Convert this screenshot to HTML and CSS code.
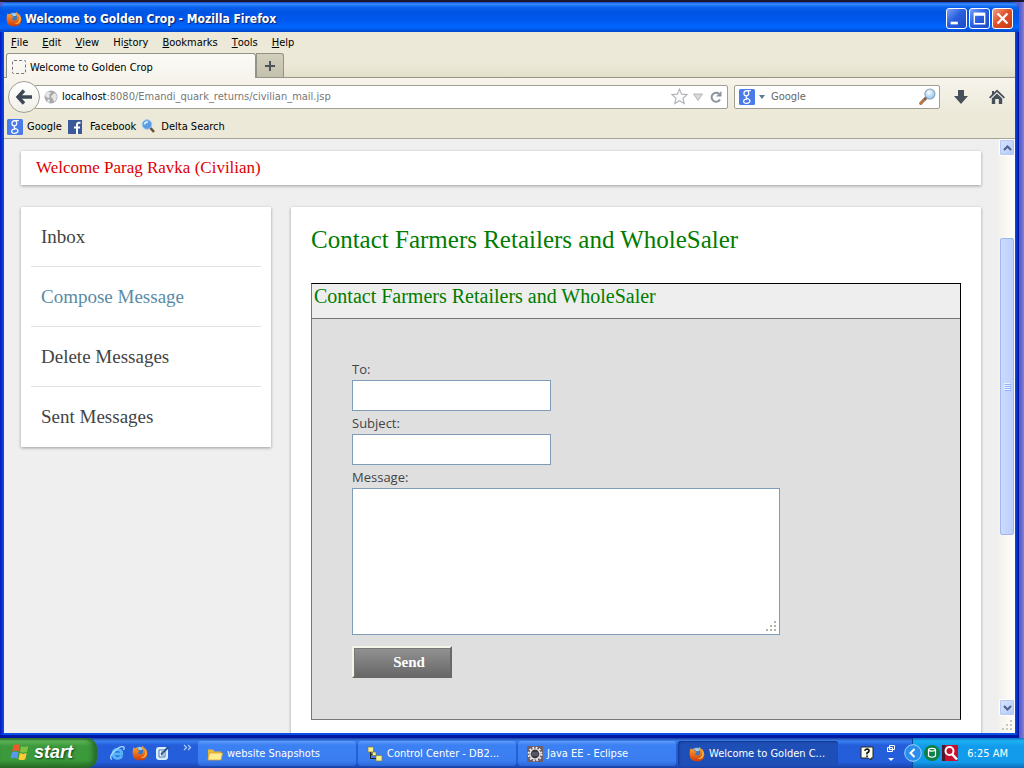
FILE: index.html
```html
<!DOCTYPE html>
<html lang="en">
<head>
<meta charset="utf-8">
<title>Welcome to Golden Crop</title>
<link rel="stylesheet" href="styles.css">
</head>
<body>
<svg class="defs" aria-hidden="true">
  <defs>
    <linearGradient id="g-fox" x1="0" y1="0" x2="0" y2="1"><stop offset="0" stop-color="#ffb02e"/><stop offset=".5" stop-color="#f0701a"/><stop offset="1" stop-color="#c63a10"/></linearGradient>
    <radialGradient id="g-lens" cx=".4" cy=".35" r=".7"><stop offset="0" stop-color="#fff"/><stop offset="1" stop-color="#7fc0ee"/></radialGradient>
    <symbol id="firefox" viewBox="0 0 16 16">
      <circle cx="8" cy="8" r="6.8" fill="#3b78c4"/>
      <path d="M5 3Q8 1 11 3L10 5 7 5Z" fill="#9fd0f2"/>
      <path d="M1.6 2.2 3.2 3.4Q4.4 2.4 6 2.6L5 4.6Q6 5.6 7.6 5.6 7.6 6.6 6 7.2 6 9 8 9.4 9.8 9.6 10.6 8.4 12.2 6 10 3.6 9.6 2 11 .8 11 2.4 12.6 3.6L12.6 2.6Q15.6 5.4 15.4 8.8 15 15.4 8 15.6 1 15.2.6 8.4.5 4.8 1.6 2.2Z" fill="url(#g-fox)"/>
      <path d="M12.6 3.6Q14.4 6 13.4 9 12 12.6 8.4 12.8 13 14 14.6 9 15 5.6 12.6 3.6Z" fill="#ffd04a"/>
    </symbol>
    <symbol id="google" viewBox="0 0 16 16">
      <rect width="16" height="16" rx="1.5" fill="#4a7bea"/>
      <path d="M11.8 1.6H7.6Q4.9 1.8 4.9 4.4 4.9 6.8 7.4 6.8 9.8 6.6 9.8 4.2 9.6 2 7.6 1.7M7.6 6.8Q6.4 8.2 8 9.2 11.2 10.4 11 12.2 10.4 14.4 7.6 14.4 4.4 14.2 4.6 12 5 9.8 8.6 9.8" fill="none" stroke="#fff" stroke-width="1.2"/>
    </symbol>
    <symbol id="magnifier" viewBox="0 0 16 16">
      <path d="M6.6 9.4 1.6 14.4" stroke="#b87848" stroke-width="3" stroke-linecap="round"/>
      <path d="M6.8 9.2 5 11" stroke="#666" stroke-width="2"/>
      <circle cx="10.3" cy="5.7" r="4.7" fill="url(#g-lens)" stroke="#8ba0ba"/>
    </symbol>
  </defs>
</svg>

<div class="desktop">
  <div class="window">
    <header class="titlebar">
      <svg class="i16"><use href="#firefox"/></svg>
      <h1 class="titlebar-text">Welcome to Golden Crop - Mozilla Firefox</h1>
      <div class="window-buttons">
        <button class="wbtn" aria-label="Minimize"><svg viewBox="0 0 21 21"><path d="M4 14h8v3H4z" fill="#fff"/></svg></button>
        <button class="wbtn" aria-label="Maximize"><svg viewBox="0 0 21 21"><path d="M4 4h13v13H4zM5.500 7.500v8h10v-8z" fill="#fff" fill-rule="evenodd"/></svg></button>
        <button class="wbtn wbtn-close" aria-label="Close"><svg viewBox="0 0 21 21"><path d="M5 5l11 11M16 5L5 16" stroke="#fff" stroke-width="2.500"/></svg></button>
      </div>
    </header>

    <div class="chrome">
      <nav class="menubar">
        <button><u>F</u>ile</button><button><u>E</u>dit</button><button><u>V</u>iew</button><button>Hi<u>s</u>tory</button><button><u>B</u>ookmarks</button><button><u>T</u>ools</button><button><u>H</u>elp</button>
      </nav>
      <div class="tabs">
        <button class="tab"><span class="tab-icon"></span>Welcome to Golden Crop</button>
        <button class="newtab" aria-label="New tab"><svg viewBox="0 0 12 12"><path d="M6 1v10M1 6h10" stroke="#4b5259" stroke-width="2"/></svg></button>
      </div>
      <div class="navbar">
        <button class="back" aria-label="Back"><svg viewBox="0 0 18 18"><path d="M9 2.500 3 9l6 6.500M3.500 9H17" fill="none" stroke="#3e4854" stroke-width="3.400"/></svg></button>
        <div class="urlbar">
          <svg class="globe" viewBox="0 0 14 14"><circle cx="7" cy="7" r="6.500" fill="#a9a9a9"/><path d="M2 3 5 1.500 7 3 5 5 6 7 4 8 1 6ZM8 5l3-2 2 3-1 4-2 2-1-3-2-2ZM4 9l2 1-1 3-2-1Z" fill="#e6e6e6"/></svg>
          <label for="url">localhost</label><input id="url" type="text" value=":8080/Emandi_quark_returns/civilian_mail.jsp">
          <button aria-label="Bookmark this page"><svg viewBox="0 0 17 17"><path d="M8.500 1.200 10.700 6.200 16 6.600 12 10.200 13.200 15.500 8.500 12.700 3.800 15.500 5 10.200 1 6.600 6.300 6.200Z" fill="#fdfdfd" stroke="#b2b5ba" stroke-width="1.200"/></svg></button>
          <button class="history" aria-label="Show history"><svg viewBox="0 0 12 12"><path d="M1.500 3h9L6 9.500Z" fill="#d8d8d8" stroke="#b8b8b8"/></svg></button>
          <button class="reload" aria-label="Reload"><svg viewBox="0 0 14 14"><path d="M10 3.800A4.500 4.500 0 1 0 11 9.500" fill="none" stroke="#8d949c" stroke-width="2"/><path d="M12.500 1v5.500H7Z" fill="#8d949c"/></svg></button>
        </div>
        <div class="searchbar">
          <svg class="i16"><use href="#google"/></svg>
          <svg class="caret" viewBox="0 0 6 4"><path d="M0 0h6L3 4Z" fill="#5a7a95"/></svg>
          <input type="text" placeholder="Google" aria-label="Search">
          <button aria-label="Search"><svg><use href="#magnifier"/></svg></button>
        </div>
        <button class="tool" aria-label="Downloads"><svg viewBox="0 0 16 16"><path d="M5 1h6v6h4L8 15 1 7h4Z" fill="#46505b"/></svg></button>
        <button class="tool" aria-label="Home"><svg viewBox="0 0 16 16"><path d="M8 .5 16 8.200 14.800 9.400 8 3 1.200 9.400 0 8.200 3 5.200V2h2v1.400Z" fill="#46505b"/><path d="M8 4.500 13.200 9.500V15H9.800V10H6.200v5H2.800V9.500Z" fill="#46505b"/></svg></button>
      </div>
      <nav class="bookmarks">
        <a href="#google"><svg class="i16"><use href="#google"/></svg>Google</a>
        <a href="#facebook" class="fb"><svg class="i16" viewBox="0 0 16 16"><path d="M1 1h14v14H1z" fill="#3b5998"/><path d="M13.500 3.800H12Q10 3.800 10 6V15M7 8.500h6" fill="none" stroke="#fff" stroke-width="2"/></svg>Facebook</a>
        <a href="#delta"><svg class="i16" viewBox="0 0 16 16"><circle cx="6" cy="5.500" r="4.800" fill="#5a9fe6" stroke="#a2c8ee"/><path d="M3.500 5.500Q4 2.500 7 3" stroke="#e8f5ff" fill="none" stroke-width="1.500"/><path d="m9.500 9 3.500 4" stroke="#684f32" stroke-width="2.500"/></svg>Delta Search</a>
      </nav>
    </div>

    <div class="viewport">
      <div class="page">
        <div class="container">
          <p class="welcome">Welcome Parag Ravka (Civilian)</p>
          <div class="columns">
            <nav class="sidebar">
              <a href="#inbox">Inbox</a>
              <a href="#compose" class="active">Compose Message</a>
              <a href="#delete">Delete Messages</a>
              <a href="#sent">Sent Messages</a>
            </nav>
            <main class="content">
              <h2 class="content-title">Contact Farmers Retailers and WholeSaler</h2>
              <section class="panel">
                <h3 class="panel-title">Contact Farmers Retailers and WholeSaler</h3>
                <form class="mail-form">
                  <label for="to">To:</label>
                  <input id="to" type="text">
                  <label for="subject">Subject:</label>
                  <input id="subject" type="text">
                  <label for="message">Message:</label>
                  <div class="message-box">
                    <textarea id="message"></textarea>
                    <svg class="grip" viewBox="0 0 12 12"><path d="M8 0h2v2H8zM4 4h2v2H4zM8 4h2v2H8zM0 8h2v2H0zM4 8h2v2H4zM8 8h2v2H8z" fill="#b5b3a4"/></svg>
                  </div>
                  <button class="send" type="button">Send</button>
                </form>
              </section>
            </main>
          </div>
        </div>
      </div>
      <div class="scrollbar">
        <button class="sbtn" aria-label="Scroll up"><svg viewBox="0 0 9 6"><path d="M1 5 4.500 1.500 8 5" fill="none" stroke="#4d6185" stroke-width="2"/></svg></button>
        <div class="track">
          <div class="thumb"><svg viewBox="0 0 7 8"><path d="M0 .5h6M0 2.500h6M0 4.500h6M0 6.500h6" stroke="#eef4fe"/><path d="M1 1.500h6M1 3.500h6M1 5.500h6M1 7.500h6" stroke="#8cb0f8"/></svg></div>
        </div>
        <button class="sbtn" aria-label="Scroll down"><svg viewBox="0 0 9 6"><path d="M1 1 4.500 4.500 8 1" fill="none" stroke="#4d6185" stroke-width="2"/></svg></button>
        <svg class="corner" viewBox="0 0 12 12"><path d="M8 0h2v2H8zM4 4h2v2H4zM8 4h2v2H8zM0 8h2v2H0zM4 8h2v2H4zM8 8h2v2H8z" fill="#c9c6bd"/></svg>
      </div>
    </div>
  </div>

  <footer class="taskbar">
    <button class="start"><svg viewBox="0 0 18 18"><path d="M3 3Q6 1 9 3L7.800 8.500Q5 6.800 2 8.500Z" fill="#ec5a2c"/><path d="M10 3.500Q13 5.200 16.500 3.500L15.300 9Q12 10.500 9 9Z" fill="#7ec242"/><path d="M1.800 9.500Q5 7.800 7.600 9.500L6.400 15Q3.500 13.200.5 15Z" fill="#5b97ee"/><path d="M8.800 10Q12 11.500 15 10L13.800 15.500Q10.500 17 7.600 15.500Z" fill="#fccb35"/></svg>start</button>
    <div class="quick">
      <button aria-label="Internet Explorer"><svg viewBox="0 0 16 16"><path d="M12.800 10.800Q11.500 13.300 8.300 13.300 4 13 4 8.800 4.300 4.500 8.300 4.500 12.800 4.700 12.800 9H5" fill="none" stroke="#58b4f4" stroke-width="2.800"/><path d="M3 14.500Q-.5 12.500 5 6.500 11 .5 14.500 1.800 15.800 3 14.500 5" fill="none" stroke="#a8dcff" stroke-width="1.300"/></svg></button>
      <button aria-label="Firefox"><svg><use href="#firefox"/></svg></button>
      <button aria-label="Show Desktop"><svg viewBox="0 0 16 16"><rect x="1" y="2" width="12" height="13" rx="3" fill="#d9edfb"/><path d="M4 5h6v7H4z" fill="#fff" stroke="#3e77b8"/><path d="M6 9.500 13.500 2" stroke="#24528c" stroke-width="2"/><path d="M6 7h3M6 10h3" stroke="#3e77b8"/></svg></button>
      <button class="more" aria-label="More"><svg viewBox="0 0 9 7"><path d="m1 1 2.500 2.500L1 6M5 1l2.500 2.500L5 6" fill="none" stroke="#a9c8fb" stroke-width="1.300"/></svg></button>
    </div>
    <div class="tasks">
      <button class="task"><svg viewBox="0 0 16 16"><path d="M1 3.500h5l1.500 2H14V14H1Z" fill="#e9b93c"/><path d="M2.500 7H15.500L14 14H1Z" fill="#ffec92" stroke="#d9a227" stroke-width=".7"/></svg>website Snapshots</button>
      <button class="task"><svg viewBox="0 0 16 16"><path d="M3.500 6v6.500H9M4 8.500h3" fill="none" stroke="#222"/><path d="M1 1h5.500v5H1zM9 9.500h6v5.500H9zM5.500 6H9v3.500H5.500z" fill="#fbf08c" stroke="#77713a" stroke-width=".6"/></svg>Control Center - DB2...</button>
      <button class="task"><svg viewBox="0 0 16 16"><path d="M0 0h16v16H0z" fill="#6d5f68"/><circle cx="8" cy="8" r="6.400" fill="none" stroke="#f0f0f0" stroke-width="2" stroke-dasharray="1.700 1.650"/><circle cx="8" cy="8" r="5" fill="#3a3640" stroke="#eee" stroke-width="1.200"/><path d="M4.500 7h7M4.500 9h7" stroke="#77718a"/></svg>Java EE - Eclipse</button>
      <button class="task task-active"><svg><use href="#firefox"/></svg>Welcome to Golden C...</button>
    </div>
    <div class="lang">
      <button aria-label="Help"><svg viewBox="0 0 14 14"><path d="M1 1h12v11h-2v2l-3-2H1Z" fill="#fffff0" stroke="#222"/><path d="M4.800 4.800Q5 3 7 3 9.300 3.200 9 5 8.800 6.300 7 7v1.500M7 9.500V11" fill="none" stroke="#111" stroke-width="1.600"/></svg></button>
      <button class="restore" aria-label="Language options"><svg viewBox="0 0 10 18"><path d="M3.500 1.500h5v4h-5zM1.500 3.500h5v4h-5z" fill="#2f63d2" stroke="#fff"/><path d="M2 14h6l-3 3Z" fill="#fff"/></svg></button>
    </div>
    <div class="tray">
      <button class="hide-icons" aria-label="Hide icons"><svg viewBox="0 0 18 18"><circle cx="9" cy="9" r="8.300" fill="#2b8eea" stroke="#9bd3fb"/><path d="M10.500 5 6.500 9l4 4" fill="none" stroke="#fff" stroke-width="2"/></svg></button>
      <svg viewBox="0 0 16 16"><circle cx="8" cy="8" r="8" fill="#0d8048"/><path d="M4.500 5v6Q8 13.500 11.500 11V5" fill="none" stroke="#fff" stroke-width="1.200"/><ellipse cx="8" cy="4.800" rx="3.500" ry="1.400" fill="none" stroke="#fff" stroke-width="1.200"/></svg>
      <svg viewBox="0 0 16 16"><path d="M0 0h16v16H0z" fill="#c8102e"/><path d="M0 0h3v16H0z" fill="#52152a"/><circle cx="7.500" cy="6" r="4" fill="#c8102e" stroke="#fff" stroke-width="2"/><path d="m10 9 5 5.500" stroke="#fff" stroke-width="2.500"/></svg>
      <time class="clock">6:25 AM</time>
    </div>
  </footer>
</div>
</body>
</html>
```
FILE: styles.css
```css
* { box-sizing: border-box; }

body {
  margin: 0;
  font-family: "DejaVu Sans Condensed", "DejaVu Sans", sans-serif;
  font-size: 11px;
  color: #000;
}

button, input, textarea { font: inherit; color: inherit; }
button { display: flex; align-items: center; padding: 0; border: 0; background: none; white-space: nowrap; }
a { color: inherit; text-decoration: none; }
svg { display: block; flex: none; }
.defs { position: absolute; width: 0; height: 0; }
.i16 { width: 16px; height: 16px; }

.desktop {
  display: flex;
  flex-direction: column;
  height: 100vh;
  overflow: hidden;
  border-top: 2px solid #1b1730;
  background: linear-gradient(90deg, #5c5cc4 calc(100% - 4px), #7d80e0);
}

/* Window frame */
.window {
  display: flex;
  flex: 1;
  flex-direction: column;
  min-height: 0;
  margin-right: 5px;
  padding: 0 4px 5px;
  border-radius: 8px 8px 0 0;
  background: linear-gradient(90deg, #0018c0, #0b50e6 4px, #0b50e6 calc(100% - 4px), #0010a0);
  box-shadow: inset 0 -3px 0 #0018a4;
}

.titlebar {
  display: flex;
  align-items: center;
  gap: 3px;
  height: 30px;
  margin: 0 -4px;
  padding: 3px 6px 0;
  border-radius: 8px 8px 0 0;
  background: linear-gradient(#0a46c8, #3a8efc 2px, #0a63ee 5px, #0054e3 10px, #0058ee 18px, #0066ff 25px, #0047cc);
}

.titlebar-text {
  flex: 1;
  margin: 0;
  font-size: 12px;
  font-weight: bold;
  color: #fff;
  text-shadow: 1px 1px 1px #0a1f66;
}

.window-buttons { display: flex; gap: 2px; }
.wbtn {
  width: 21px;
  height: 21px;
  border: 1px solid #fff;
  border-radius: 3px;
  background: linear-gradient(135deg, #7ba2f4, #2a5fe0 45%, #1a4bc8);
}
.wbtn svg { width: 19px; height: 19px; }
.wbtn-close { background: linear-gradient(135deg, #f0a088, #e0512b 45%, #c43a14); }

/* Browser toolbars */
.chrome { background: #ece9d8; border-bottom: 1px solid #a5a396; }

.menubar { display: flex; gap: 14px; height: 21px; padding: 0 7px; }

.tabs {
  display: flex;
  align-items: flex-end;
  height: 25px;
  padding-left: 2px;
  border-bottom: 1px solid #94938a;
  background: linear-gradient(#ece9d8 50%, #e2dfc9);
}
.tab {
  width: 250px;
  height: 25px;
  gap: 4px;
  padding: 2px 6px 0 5px;
  margin-bottom: -1px;
  border: 1px solid #94938a;
  border-bottom: 0;
  border-radius: 3px 3px 0 0;
  background: linear-gradient(#fbfaf6, #f6f4ec);
}
.tab-icon { width: 14px; height: 14px; border: 1px dashed #777; border-radius: 2px; }
.newtab {
  justify-content: center;
  width: 28px;
  height: 24px;
  border: 1px solid #94938a;
  border-bottom: 0;
  border-radius: 0 3px 0 0;
  background: linear-gradient(#d2cfbd, #c3c0ae);
}
.newtab svg { width: 12px; height: 12px; }

.navbar {
  display: flex;
  align-items: center;
  height: 37px;
  padding-right: 10px;
  background: linear-gradient(#f6f4ec, #ece9d8);
}
.back {
  z-index: 1;
  justify-content: center;
  width: 32px;
  height: 32px;
  margin-left: 4px;
  border: 1px solid #a19f94;
  border-radius: 50%;
  background: linear-gradient(#fff, #f0eee6);
}
.back svg { width: 18px; height: 18px; }
.urlbar, .searchbar {
  display: flex;
  align-items: center;
  height: 24px;
  border: 1px solid #a19f94;
  border-radius: 2px;
  background: #fff;
}
.urlbar { flex: 1; margin-left: -6px; padding: 0 4px 0 9px; }
.urlbar input, .searchbar input { flex: 1; min-width: 0; padding: 0; border: 0; outline: 0; background: none; color: #777; }
.urlbar button svg { width: 17px; height: 17px; }
.globe { width: 14px; height: 14px; margin-right: 4px; }
.urlbar .history { margin: 0 5px 0 4px; }
.urlbar .history svg { width: 12px; height: 12px; }
.urlbar .reload svg { width: 14px; height: 14px; }
.searchbar { flex: 0 0 206px; margin: 0 13px 0 6px; padding: 0 3px 0 4px; }
.searchbar input::placeholder { color: #666; opacity: 1; }
.searchbar button svg { width: 17px; height: 17px; }
.caret { width: 6px; height: 4px; margin: 0 6px 0 4px; }
.tool svg { width: 16px; height: 16px; }
.tool + .tool { margin-left: 20px; }

.bookmarks { display: flex; gap: 5px; height: 23px; padding: 0 3px; }
.bookmarks a { display: flex; align-items: center; gap: 4px; }
.bookmarks .fb { gap: 7px; }

/* Web page */
.viewport { display: flex; flex: 1; min-height: 0; background: #efefef; }
.page {
  flex: 1;
  min-width: 0;
  overflow: hidden;
  font-family: "Liberation Serif", serif;
}
.container { max-width: 960px; margin: 0 auto; padding-top: 12px; }
.welcome, .sidebar, .content { background: #fff; box-shadow: 0 1px 3px rgba(0, 0, 0, .35); }
.welcome {
  margin: 0 0 22px;
  padding: 0 15px;
  font-size: 17px;
  line-height: 34px;
  color: #e00000;
}
.columns { display: flex; align-items: flex-start; gap: 20px; }
.sidebar { flex: 0 0 250px; padding: 0 10px; font-size: 19px; color: #444; }
.sidebar a { display: block; height: 60px; padding: 0 10px; line-height: 60px; border-bottom: 1px solid #e2e2e2; }
.sidebar a:last-child { border-bottom: 0; }
.sidebar .active { color: #5a8ba5; }

.content { flex: 1; padding: 15px 20px 40px; color: #007c00; }
.content-title { margin: 0 0 25px; font-size: 25px; font-weight: normal; line-height: 36px; }
.panel { border: 1px solid #000; border-left-color: #777; border-bottom-color: #777; background: #dfdfdf; }
.panel-title {
  margin: 0;
  padding: 0 2px 9px;
  font-size: 20px;
  font-weight: normal;
  line-height: 25px;
  border-bottom: 1px solid #777;
  background: #eee;
}

.mail-form {
  display: flex;
  flex-direction: column;
  align-items: flex-start;
  padding: 38px 40px 41px;
  font-family: "Open Sans", sans-serif;
  font-size: 13px;
  color: #444;
}
.mail-form label { padding-top: 2px; line-height: 21px; }
.mail-form input, .mail-form textarea { display: block; border: 1px solid #7f9db9; background: #fff; }
.mail-form input { width: 199px; height: 31px; padding: 4px; }
.message-box { position: relative; width: 428px; max-width: 100%; }
.mail-form textarea { width: 100%; height: 147px; padding: 4px; resize: none; }
.grip { position: absolute; right: 2px; bottom: 2px; width: 12px; height: 12px; }
.send {
  justify-content: center;
  width: 100px;
  height: 32px;
  margin-top: 11px;
  padding-left: 14px;
  border: 2px solid;
  border-color: #f4f5e8 #686868 #686868 #f4f5e8;
  border-radius: 2px 0 0 0;
  background: linear-gradient(#929292, #686868);
  box-shadow: inset 1px 1px 0 #777;
  font-family: "Liberation Serif", serif;
  font-size: 15px;
  font-weight: bold;
  color: #fff;
}

/* Scrollbar */
.scrollbar { display: flex; flex: 0 0 17px; flex-direction: column; background: linear-gradient(90deg, #f3f1ec, #fefefb); }
.sbtn {
  justify-content: center;
  height: 17px;
  margin-left: 1px;
  border: 1px solid #fff;
  border-radius: 2px;
  background: linear-gradient(135deg, #dae5fe, #b4c9fa);
  box-shadow: inset 0 0 0 1px #b4c8f6;
}
.sbtn svg { width: 9px; height: 6px; }
.track { flex: 1; display: grid; grid-template-rows: 82fr 297fr 164fr; }
.thumb {
  grid-row: 2;
  display: flex;
  align-items: center;
  justify-content: center;
  margin: 0 1px 0 2px;
  border: 1px solid #a0b8ee;
  border-radius: 2px;
  background: linear-gradient(90deg, #cbdafe, #bccffc);
}
.thumb svg { width: 7px; height: 8px; }
.corner { width: 12px; height: 12px; margin: 4px 0 1px 4px; }

/* Taskbar */
.taskbar {
  display: flex;
  flex: 0 0 30px;
  background: linear-gradient(#1941a5, #3a80f0 3px, #245edb 7px, #245edb 24px, #1941a5);
  color: #fff;
}
.start {
  gap: 4px;
  width: 97px;
  padding: 0 10px 2px;
  border-radius: 0 10px 10px 0;
  background: linear-gradient(#2c702c, #5fb75a 3px, #3c993c 8px, #3a9a3a 22px, #256b25);
  box-shadow: inset -4px 0 5px #276a27;
  font-family: "Liberation Sans", sans-serif;
  font-size: 18px;
  font-weight: bold;
  font-style: italic;
  text-shadow: 1px 1px 2px #143c14;
}
.start svg { width: 20px; height: 20px; }
.quick { display: flex; gap: 7px; width: 101px; padding-left: 12px; }
.quick svg { width: 16px; height: 16px; }
.quick .more { align-items: flex-start; padding-top: 6px; margin-left: 5px; }
.quick .more svg { width: 9px; height: 7px; }
.tasks { display: flex; flex: 1; gap: 2px; min-width: 0; padding: 3px 0 2px; }
.task {
  flex: 0 1 158px;
  min-width: 0;
  gap: 4px;
  padding: 0 9px;
  overflow: hidden;
  border-radius: 3px;
  background: linear-gradient(#5e9bfb, #3c81f3 4px, #3a7df0 20px, #2c66d6);
}
.task svg { width: 16px; height: 16px; }
.task-active { flex-basis: 160px; padding-left: 11px; background: #1e4fb7; box-shadow: inset 1px 1px 2px #12368a; }
.lang { display: flex; gap: 12px; padding-right: 8px; }
.lang svg { width: 14px; height: 14px; }
.lang .restore svg { width: 10px; height: 18px; }
.tray {
  display: flex;
  align-items: center;
  gap: 2px;
  padding-right: 16px;
  margin-left: 8px;
  background: linear-gradient(#0f75c8, #1cb2f3 3px, #129beb 8px, #129beb 24px, #0d6dbb);
  border-left: 1px solid #0b4a9a;
}
.tray svg { width: 16px; height: 16px; }
.tray .hide-icons { margin-left: -9px; }
.tray .hide-icons svg { width: 18px; height: 18px; }
.clock { margin-left: 7px; }
```
